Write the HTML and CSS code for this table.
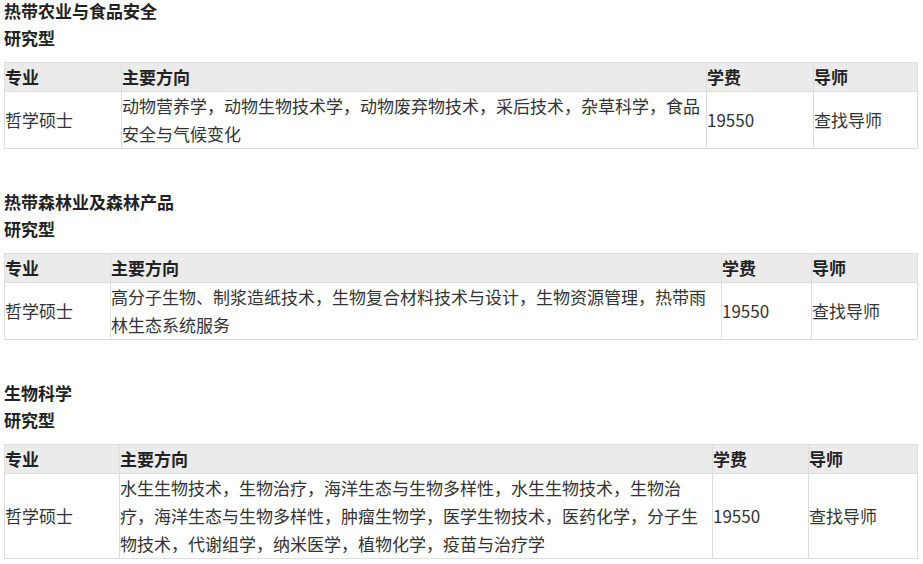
FILE: index.html
```html
<!DOCTYPE html>
<html lang="zh-CN">
<head>
  <meta charset="UTF-8" />
  <meta name="viewport" content="width=device-width, initial-scale=1.0"/>
  <title>研究型专业</title>
  <link rel="stylesheet" href="styles.css">
</head>
<body>

  <div class="page">

    <div class="section">
      <h3 class="subject">热带农业与食品安全</h3>
      <p class="type">研究型</p>
      <table class="programs t1">
        <colgroup>
          <col class="c-degree">
          <col>
          <col class="c-fee">
          <col class="c-tutor">
        </colgroup>
        <tr>
          <th>专业</th>
          <th>主要方向</th>
          <th>学费</th>
          <th>导师</th>
        </tr>
        <tr>
          <td>哲学硕士</td>
          <td>动物营养学，动物生物技术学，动物废弃物技术，采后技术，杂草科学，食品安全与气候变化</td>
          <td>19550</td>
          <td>查找导师</td>
        </tr>
      </table>
    </div>

    <div class="section">
      <h3 class="subject">热带森林业及森林产品</h3>
      <p class="type">研究型</p>
      <table class="programs t2">
        <colgroup>
          <col class="c-degree">
          <col>
          <col class="c-fee">
          <col class="c-tutor">
        </colgroup>
        <tr>
          <th>专业</th>
          <th>主要方向</th>
          <th>学费</th>
          <th>导师</th>
        </tr>
        <tr>
          <td>哲学硕士</td>
          <td>高分子生物、制浆造纸技术，生物复合材料技术与设计，生物资源管理，热带雨林生态系统服务</td>
          <td>19550</td>
          <td>查找导师</td>
        </tr>
      </table>
    </div>

    <div class="section">
      <h3 class="subject">生物科学</h3>
      <p class="type">研究型</p>
      <table class="programs t3">
        <colgroup>
          <col class="c-degree">
          <col>
          <col class="c-fee">
          <col class="c-tutor">
        </colgroup>
        <tr>
          <th>专业</th>
          <th>主要方向</th>
          <th>学费</th>
          <th>导师</th>
        </tr>
        <tr>
          <td>哲学硕士</td>
          <td>水生生物技术，生物治疗，海洋生态与生物多样性，水生生物技术，生物治疗，海洋生态与生物多样性，肿瘤生物学，医学生物技术，医药化学，分子生物技术，代谢组学，纳米医学，植物化学，疫苗与治疗学</td>
          <td>19550</td>
          <td>查找导师</td>
        </tr>
      </table>
    </div>

  </div>

</body>
</html>
```

FILE: styles.css
```css
body {
  font-family: "Noto Sans CJK SC", "Noto Sans", sans-serif;
  font-size: 17px;
  line-height: 28px;
  color: #333;
  background-color: #fff;
  margin: 0 5px 0 4px;
}
.section {
  margin-bottom: 42px;
}
.subject,
.type {
  margin: 0;
  font-size: 17px;
  font-weight: bold;
  color: #222;
}
.subject {
  line-height: 21px;
  margin-bottom: 3px;
}
.type {
  line-height: 28px;
  margin-bottom: 10px;
}
.programs {
  width: 100%;
  table-layout: fixed;
  border-collapse: collapse;
}
.programs th,
.programs td {
  border: 1px solid #dedede;
  padding: 0;
  text-align: left;
  vertical-align: middle;
}
.programs th {
  background-color: #ebebeb;
  font-weight: bold;
  color: #222;
}
.t1 .c-degree { width: 117px; }
.t1 .c-fee { width: 107px; }
.t1 .c-tutor { width: 104px; }
.t2 .c-degree { width: 106px; }
.t2 .c-fee { width: 90px; }
.t2 .c-tutor { width: 106px; }
.t3 .c-degree { width: 115px; }
.t3 .c-fee { width: 96px; }
.t3 .c-tutor { width: 109px; }
```
